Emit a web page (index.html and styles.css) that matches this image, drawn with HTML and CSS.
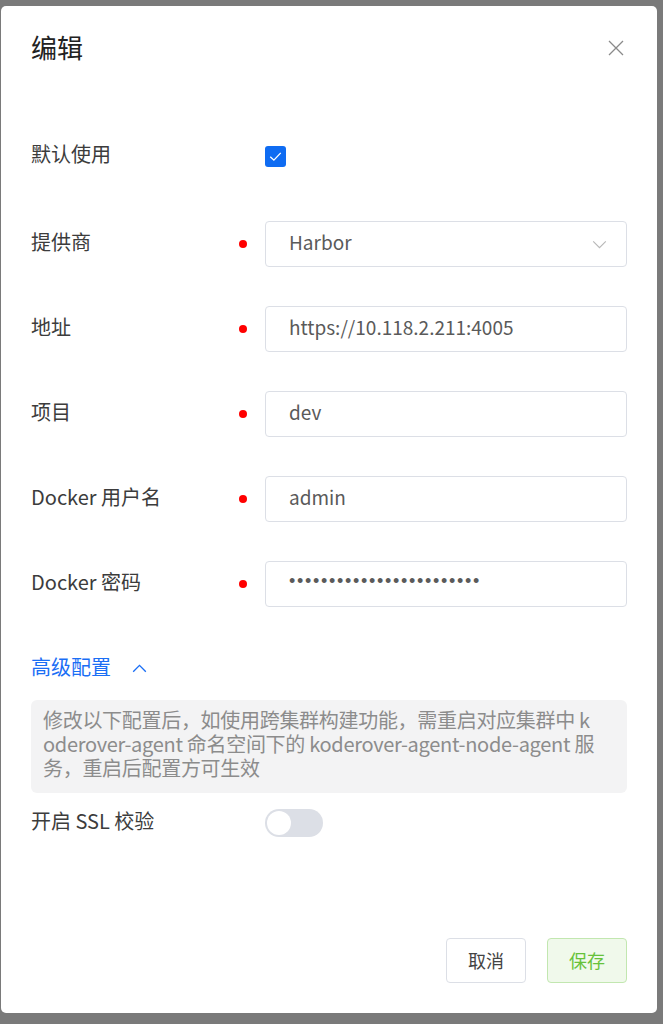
FILE: index.html
```html
<!DOCTYPE html>
<html>

<head>
    <title>编辑</title>
    <link rel="stylesheet" href="styles.css">
</head>

<body>
    <div class="modal">
        <div class="modal-header">
            <h2 class="title">编辑</h2>
            <svg class="close" viewBox="0 0 16 16" width="16" height="16">
                <path d="M1 1L15 15M15 1L1 15" stroke="#8a8a8a" stroke-width="1.3" fill="none" />
            </svg>
        </div>

        <div class="form">
            <div class="row first">
                <span class="label">默认使用</span>
                <span class="mark"></span>
                <span class="checkbox">
                    <svg viewBox="0 0 22 22" width="21" height="21">
                        <path d="M5.5 11.2L9.3 14.8L16.5 7.2" stroke="#fff" stroke-width="1.4" fill="none" />
                    </svg>
                </span>
            </div>
            <div class="row">
                <span class="label">提供商</span>
                <span class="mark req"></span>
                <div class="input select">
                    <span>Harbor</span>
                    <svg viewBox="0 0 16 10" width="15" height="9">
                        <path d="M1 1.5L8 8.5L15 1.5" stroke="#b8b8b8" stroke-width="1.3" fill="none" />
                    </svg>
                </div>
            </div>
            <div class="row">
                <span class="label">地址</span>
                <span class="mark req"></span>
                <div class="input">https://10.118.2.211:4005</div>
            </div>
            <div class="row">
                <span class="label">项目</span>
                <span class="mark req"></span>
                <div class="input">dev</div>
            </div>
            <div class="row">
                <span class="label">Docker 用户名</span>
                <span class="mark req"></span>
                <div class="input">admin</div>
            </div>
            <div class="row">
                <span class="label">Docker 密码</span>
                <span class="mark req"></span>
                <div class="input"><span class="pwd">••••••••••••••••••••••••</span></div>
            </div>
        </div>

        <div class="adv-toggle">
            <span>高级配置</span>
            <svg viewBox="0 0 16 10" width="15" height="9">
                <path d="M1 8.5L8 1.5L15 8.5" stroke="#1a6ef5" stroke-width="1.5" fill="none" />
            </svg>
        </div>
        <div class="tip">修改以下配置后，如使用跨集群构建功能，需重启对应集群中 koderover-agent 命名空间下的 koderover-agent-node-agent 服务，重启后配置方可生效</div>
        <div class="row ssl">
            <span class="label">开启 SSL 校验</span>
            <span class="mark"></span>
            <span class="switch"></span>
        </div>

        <div class="footer">
            <button class="btn">取消</button>
            <button class="btn btn-save">保存</button>
        </div>
    </div>
</body>

</html>
```

FILE: styles.css
```css
body {
    margin: 0;
    background-color: #7a7a7a;
    font-family: "Noto Sans CJK SC", "Noto Sans", sans-serif;
}

.modal {
    width: 656px;
    height: 1007px;
    margin: 6px 0 0 1px;
    padding: 23px 30px 30px;
    box-sizing: border-box;
    background-color: #fff;
    border-radius: 5px;
    display: flex;
    flex-direction: column;
}

.modal-header {
    height: 36px;
    display: flex;
    justify-content: space-between;
    align-items: center;
}

.title {
    margin: 0;
    font-size: 26px;
    font-weight: 400;
    line-height: 36px;
    color: #222;
}

.close {
    margin-right: 3px;
    margin-top: 1px;
}

.form {
    margin-top: 68px;
    display: flex;
    flex-direction: column;
    gap: 39px;
}

.row {
    height: 46px;
    display: flex;
    align-items: center;
}

.row.first {
    margin-bottom: 3px;
}

.label {
    width: 208px;
    flex: none;
    padding-bottom: 5px;
    font-size: 20px;
    color: #3c3c3c;
}

.mark {
    width: 8px;
    height: 8px;
    margin-right: 18px;
    border-radius: 50%;
    flex: none;
}

.mark.req {
    background-color: #f00;
}

.checkbox {
    width: 21px;
    height: 21px;
    border-radius: 3px;
    background-color: #0f6cf2;
    display: flex;
}

.input {
    flex: 1;
    height: 46px;
    box-sizing: border-box;
    padding: 0 19px 5px 23px;
    border: 1px solid #dcdfe6;
    border-radius: 4px;
    display: flex;
    align-items: center;
    justify-content: space-between;
    font-size: 19px;
    color: #5a5a5a;
}

.select svg {
    margin-top: 5px;
}

.pwd {
    font-family: "Liberation Sans", sans-serif;
    font-size: 18px;
    letter-spacing: 1.7px;
}

.adv-toggle {
    margin-top: 47px;
    height: 28px;
    display: flex;
    align-items: center;
    gap: 21px;
    font-size: 20px;
    color: #1a6ef5;
}

.adv-toggle span {
    padding-bottom: 3px;
}

.tip {
    margin-top: 18px;
    padding: 8px 30px 13px 12px;
    background-color: #f3f3f4;
    border-radius: 6px;
    font-size: 20px;
    line-height: 24px;
    letter-spacing: -0.3px;
    color: #8c8c8c;
    word-break: break-all;
}

.row.ssl {
    height: 28px;
    margin-top: 16px;
}

.switch {
    width: 58px;
    height: 28px;
    border-radius: 14px;
    background-color: #dcdfe6;
    position: relative;
}

.switch::after {
    content: "";
    position: absolute;
    left: 2px;
    top: 2px;
    width: 24px;
    height: 24px;
    border-radius: 50%;
    background-color: #fff;
}

.footer {
    margin-top: auto;
    display: flex;
    justify-content: flex-end;
    gap: 21px;
}

.btn {
    width: 80px;
    height: 45px;
    padding-bottom: 3px;
    border: 1px solid #dcdfe6;
    border-radius: 4px;
    background-color: #fff;
    font-family: "Noto Sans CJK SC", sans-serif;
    font-size: 18px;
    color: #444;
}

.btn-save {
    background-color: #f0f9eb;
    border-color: #c2e7b0;
    color: #67c23a;
}
```
